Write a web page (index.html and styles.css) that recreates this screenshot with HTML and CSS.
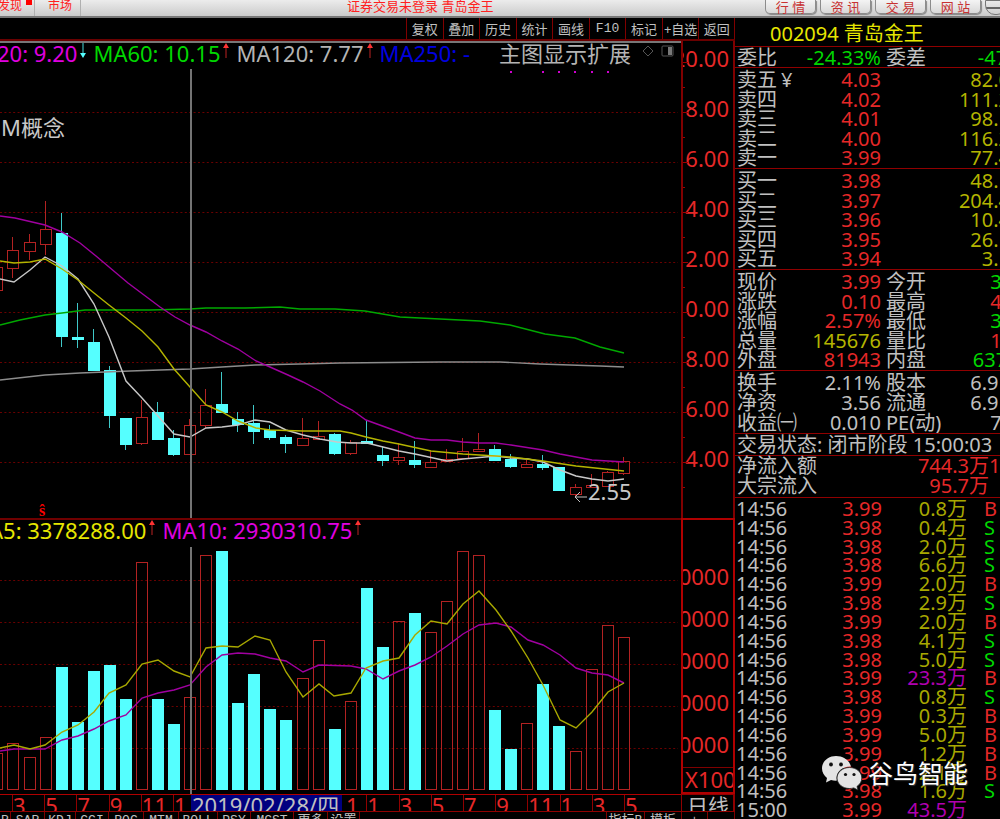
FILE: index.html
```html
<!DOCTYPE html>
<html lang="zh-CN">
<head>
<meta charset="utf-8">
<title>青岛金王 002094</title>
<link rel="stylesheet" href="styles.css">
</head>
<body>
<header class="topbar">
  <nav class="topnav">
    <a class="topnav-item first" href="#">发现<span class="dot"></span></a>
    <a class="topnav-item" href="#">市场</a>
  </nav>
  <p class="caption">证券交易未登录 青岛金王</p>
  <div class="top-buttons">
    <button class="pill">行 情</button>
    <button class="pill">资 讯</button>
    <button class="pill">交 易</button>
    <button class="pill">网 站</button>
    <button class="round" aria-label="最小化"></button>
  </div>
</header>
<main class="terminal">
  <section class="charts">
    <div class="toolbar">
      <div class="tools">
        <button>复权</button><button>叠加</button><button>历史</button><button>统计</button><button>画线</button><button class="mono">F10</button><button>标记</button><button>+自选</button><button>返回</button>
      </div>
    </div>
    <div class="panes">
      <div class="pane price-pane">
        <div class="legend">
          <span class="magenta lead-ma20">20: 9.20</span><svg class="arrow" viewBox="0 0 8 16"><path d="M4 0V11" stroke="#4dd" /><path d="M1 10h6L4 15z" fill="#5ff"/></svg>
          <span class="green">MA60: 10.15</span><svg class="arrow" viewBox="0 0 8 16"><path d="M4 4V15" stroke="#b22"/><path d="M1 5h6L4 0z" fill="#f33"/></svg>
          <span class="silver">MA120: 7.77</span><svg class="arrow" viewBox="0 0 8 16"><path d="M4 4V15" stroke="#b22"/><path d="M1 5h6L4 0z" fill="#f33"/></svg>
          <span class="blue">MA250: -</span>
          <span class="silver overlay-title">主图显示扩展</span>
          <svg class="pane-icons" viewBox="0 0 36 16"><path d="M7 3l5 5-5 5-5-5z" fill="none" stroke="#555"/><rect x="21" y="3" width="11" height="10" rx="1" fill="none" stroke="#555"/><path d="M27 4h4v8h-4z" fill="#777"/></svg>
        </div>
        <div class="plot">
          <svg id="price" viewBox="0 69 681 449" preserveAspectRatio="none"></svg>
          <span class="note concept">M概念</span>
          <span class="note mark">ŝ</span>
          <span class="note low"><svg viewBox="0 0 14 12"><path d="M13 6H1M6 1L1 6l5 5" fill="none" stroke="#c0c0c0"/></svg>2.55</span>
        </div>
      </div>
      <div class="axis price-axis">
        <svg class="ticks-svg" id="priceTicks" viewBox="0 41 8 477" preserveAspectRatio="none"></svg>
        <div class="axis-labels"><span>20.00</span><span>8.00</span><span>6.00</span><span>4.00</span><span>2.00</span><span>0.00</span><span>8.00</span><span>6.00</span><span>4.00</span></div>
      </div>
      <div class="pane volume-pane">
        <div class="legend">
          <span class="yellow lead-ma5">A5: 3378288.00</span><svg class="arrow" viewBox="0 0 8 16"><path d="M4 4V15" stroke="#b22"/><path d="M1 5h6L4 0z" fill="#f33"/></svg>
          <span class="magenta">MA10: 2930310.75</span><svg class="arrow" viewBox="0 0 8 16"><path d="M4 4V15" stroke="#b22"/><path d="M1 5h6L4 0z" fill="#f33"/></svg>
        </div>
        <div class="plot">
          <svg id="volume" viewBox="0 547 681 247" preserveAspectRatio="none"></svg>
        </div>
      </div>
      <div class="axis volume-axis">
        <div class="axis-labels"><span>0000</span><span>0000</span><span>0000</span><span>0000</span><span>0000</span></div>
        <div class="unit">X100</div>
      </div>
      <div class="timeline">
        <span>3</span><span>5</span><span>7</span><span>9</span><span>11</span><span>1</span><span></span><span></span><span></span><span></span><span class="tail">1</span><span>1</span><span>3</span><span>5</span><span>7</span><span>9</span><span>11</span><span>1</span><span>3</span><span>5</span>
        <time class="cursor-date">2019/02/28/四</time>
      </div>
      <div class="period">日线</div>
      <div class="indicators">
        <button class="cut">R</button><button>SAR</button><button>KDJ</button><button>CCI</button><button>ROC</button><button>MTM</button><button>BOLL</button><button>PSY</button><button>MCST</button><button>更多</button><button>设置</button><span></span><button>指标B</button><button>模板</button><button>+</button><button>-</button>
      </div>
    </div>
  </section>
  <aside class="quote">
    <h1 class="stock">002094 青岛金王</h1>
    <dl class="block ratio">
      <div class="row"><dt>委比</dt><dd class="green">-24.33%</dd><dt>委差</dt><dd class="green">-4787</dd></div>
    </dl>
    <dl class="block five">
      <div class="row"><dt>卖五<span class="yen">¥</span></dt><dd>4.03</dd><dd class="vol">82.0万</dd></div>
      <div class="row"><dt>卖四</dt><dd>4.02</dd><dd class="vol">111.2万</dd></div>
      <div class="row"><dt>卖三</dt><dd>4.01</dd><dd class="vol">98.1万</dd></div>
      <div class="row"><dt>卖二</dt><dd>4.00</dd><dd class="vol">116.2万</dd></div>
      <div class="row"><dt>卖一</dt><dd>3.99</dd><dd class="vol">77.4万</dd></div>
    </dl>
    <dl class="block five">
      <div class="row"><dt>买一</dt><dd>3.98</dd><dd class="vol">48.1万</dd></div>
      <div class="row"><dt>买二</dt><dd>3.97</dd><dd class="vol">204.4万</dd></div>
      <div class="row"><dt>买三</dt><dd>3.96</dd><dd class="vol">10.4万</dd></div>
      <div class="row"><dt>买四</dt><dd>3.95</dd><dd class="vol">26.1万</dd></div>
      <div class="row"><dt>买五</dt><dd>3.94</dd><dd class="vol">3.1万</dd></div>
    </dl>
    <dl class="block five">
      <div class="row"><dt>现价</dt><dd>3.99</dd><dt>今开</dt><dd class="green">3.88</dd></div>
      <div class="row"><dt>涨跌</dt><dd>0.10</dd><dt>最高</dt><dd>4.05</dd></div>
      <div class="row"><dt>涨幅</dt><dd>2.57%</dd><dt>最低</dt><dd class="green">3.85</dd></div>
      <div class="row"><dt>总量</dt><dd class="olive">145676</dd><dt>量比</dt><dd>1.05</dd></div>
      <div class="row"><dt>外盘</dt><dd>81943</dd><dt>内盘</dt><dd class="green">63733</dd></div>
    </dl>
    <dl class="block padded">
      <div class="row"><dt>换手</dt><dd class="silver">2.11%</dd><dt>股本</dt><dd class="silver">6.91亿</dd></div>
      <div class="row"><dt>净资</dt><dd class="silver">3.56</dd><dt>流通</dt><dd class="silver">6.91亿</dd></div>
      <div class="row"><dt>收益㈠</dt><dd class="silver">0.010</dd><dt>PE(动)</dt><dd class="silver">73.5</dd></div>
    </dl>
    <p class="block status">交易状态: 闭市阶段 15:00:03</p>
    <dl class="block flow">
      <div class="row"><dt>净流入额</dt><dd>744.3万</dd><dd class="share">17%</dd></div>
      <div class="row"><dt>大宗流入</dt><dd>95.7万</dd></div>
    </dl>
    <table class="trades">
      <tbody>
        <tr><td>14:56</td><td>3.99</td><td>0.8万</td><td>B</td></tr>
        <tr class="sell"><td>14:56</td><td>3.98</td><td>0.4万</td><td>S</td></tr>
        <tr class="sell"><td>14:56</td><td>3.98</td><td>2.0万</td><td>S</td></tr>
        <tr class="sell"><td>14:56</td><td>3.98</td><td>6.6万</td><td>S</td></tr>
        <tr><td>14:56</td><td>3.99</td><td>2.0万</td><td>B</td></tr>
        <tr class="sell"><td>14:56</td><td>3.98</td><td>2.9万</td><td>S</td></tr>
        <tr><td>14:56</td><td>3.99</td><td>2.0万</td><td>B</td></tr>
        <tr class="sell"><td>14:56</td><td>3.98</td><td>4.1万</td><td>S</td></tr>
        <tr class="sell"><td>14:56</td><td>3.98</td><td>5.0万</td><td>S</td></tr>
        <tr class="big"><td>14:56</td><td>3.99</td><td>23.3万</td><td>B</td></tr>
        <tr class="sell"><td>14:56</td><td>3.98</td><td>0.8万</td><td>S</td></tr>
        <tr><td>14:56</td><td>3.99</td><td>0.3万</td><td>B</td></tr>
        <tr><td>14:56</td><td>3.99</td><td>5.0万</td><td>B</td></tr>
        <tr><td>14:56</td><td>3.99</td><td>1.2万</td><td>B</td></tr>
        <tr><td>14:56</td><td>3.99</td><td>2.1万</td><td>B</td></tr>
        <tr class="sell"><td>14:56</td><td>3.98</td><td>1.6万</td><td>S</td></tr>
        <tr class="big"><td>15:00</td><td>3.99</td><td>43.5万</td><td></td></tr>
      </tbody>
    </table>
    <div class="watermark">
      <svg viewBox="0 0 42 36"><path d="M15 1C7 1 1 6.500 1 13.500c0 4 2 7 5 9.500l-1 4.500 5-2.500c2 .5 4 .8 6 .6-2-8 5-14.600 14-14.100C28.500 5.500 22.500 1 15 1z" fill="#e4e4e4"/><path d="M28.500 12.500c-7 0-12.500 4.700-12.500 10.500s5.500 10.500 12.500 10.500c1.500 0 3-.2 4.300-.6l4.200 2.200-1-3.700c3-2 4.800-5 4.800-8.400 0-5.800-5.300-10.500-12.300-10.500z" fill="#e4e4e4" stroke="#222" stroke-width=".8"/><g fill="#111"><circle cx="10" cy="9.500" r="1.900"/><circle cx="20" cy="9.500" r="1.900"/><circle cx="24.500" cy="19.500" r="1.600"/><circle cx="33" cy="19.500" r="1.600"/></g></svg>
      <span>谷鸟智能</span>
    </div>
  </aside>
</main>
<script src="chart.js"></script>
</body>
</html>
```
FILE: styles.css
```css
* { box-sizing: border-box; margin: 0; padding: 0; }
html, body { height: 100%; }
body {
  display: flex;
  flex-direction: column;
  overflow: hidden;
  background: #000;
  color: #c0c0c0;
  font-family: "Noto Sans", "Noto Sans CJK SC", sans-serif;
}
button { border: 0; background: none; color: inherit; font: inherit; white-space: nowrap; }
a { color: inherit; text-decoration: none; }

.magenta { color: #e000e0; }
.green { color: #00d800; }
.silver { color: #b4b4b4; }
.blue { color: #0000e0; }
.yellow { color: #e6e600; }

/* top bar */
.topbar {
  flex: none;
  display: grid;
  grid-template-columns: 347px 1fr 235px;
  height: 18px;
  border-bottom: 2px solid #777;
  background: linear-gradient(#ececec, #cbcbcb);
  color: #ff2020;
  font-size: 12px;
  line-height: 12px;
  overflow: hidden;
}
.topnav { display: flex; }
.topnav-item { position: relative; padding: 0 8px; border-right: 1px solid #b0b0b0; }
.topnav-item.first { width: 35px; margin-right: 5px; padding: 0; text-indent: -2px; }
.dot { position: absolute; right: 2px; top: 0; width: 6px; height: 5px; background: #f00; }
.caption { font-size: 13px; }
.top-buttons { display: flex; gap: 4px; }
.pill {
  flex: none;
  width: 51px;
  height: 14px;
  border: 1px solid #8c8c8c;
  border-top: 0;
  border-radius: 0 0 5px 5px;
  background: linear-gradient(#f4f4f4, #d8d8d8);
  box-shadow: 1px 1px 1px #888;
  color: #c83232;
  font-size: 13px;
  line-height: 8px;
}
.round { flex: none; width: 22px; height: 15px; border: 1px solid #777; border-radius: 0 0 10px 10px; background: linear-gradient(transparent 45%, #666 45% 60%, transparent 60%); }

/* layout */
.terminal { flex: 1; min-height: 0; display: grid; grid-template-columns: minmax(0, 1fr) 265px; }
.charts { display: flex; flex-direction: column; min-width: 0; min-height: 0; }
.toolbar { flex: none; display: flex; justify-content: flex-end; height: 23px; border-bottom: 2px solid #6a0000; }
.tools { display: grid; grid-template-columns: repeat(9, 1fr); width: 329px; font-size: 13px; }
.tools button { border-left: 1px solid #800000; line-height: 20px; overflow: hidden; }
.tools button:last-child { border-right: 1px solid #800000; }
.tools .mono { font-family: "Liberation Mono", monospace; }

.panes {
  flex: 1;
  min-height: 0;
  display: grid;
  grid-template-columns: minmax(0, 1fr) 54px;
  grid-template-rows: minmax(0, 477fr) minmax(0, 276fr) 18px 7px;
}
.pane { display: flex; flex-direction: column; min-width: 0; }
.price-pane { border-top: 2px solid #777; }
.volume-pane { border-top: 2px solid #700000; }
.legend { display: flex; flex: none; height: 26px; font-size: 22px; line-height: 20px; white-space: nowrap; overflow: hidden; }
.volume-pane .legend { height: 27px; }
.arrow { flex: none; width: 8px; height: 16px; margin: 0 6px 0 2px; }
.lead-ma20 { margin-left: -3px; }
.lead-ma5 { margin-left: -11px; }
.overlay-title { margin-left: 29px; }
.pane-icons { flex: none; width: 36px; height: 16px; margin-left: 10px; }
.plot { position: relative; flex: 1; min-height: 0; }
.plot > svg { display: block; width: 100%; height: 100%; }
.note { position: absolute; color: #c8c8c8; font-size: 22px; line-height: 24px; white-space: nowrap; }
.concept { left: 1px; top: 46px; }
.mark { left: 39px; bottom: -2px; color: #f00; font: bold 16px/18px "Liberation Serif", serif; }
.low { left: 574px; bottom: 15px; display: flex; align-items: center; }
.low svg { width: 14px; height: 12px; margin-top: 11px; }

.axis { position: relative; border-left: 2px solid #800000; border-right: 2px solid #800000; color: #e62828; font-size: 22px; overflow: hidden; }
.axis-labels { display: flex; flex-direction: column; align-items: flex-end; padding-right: 4px; }
.price-axis .axis-labels { margin-top: -8px; line-height: 50px; }
.ticks-svg { position: absolute; left: 0; top: 0; width: 8px; height: 100%; }
.volume-axis { display: flex; flex-direction: column; border: 2px solid #b00000; }
.volume-axis .axis-labels { flex: 1; padding-top: 35px; line-height: 42px; }
.unit { border-top: 1px solid #800000; padding-left: 2px; line-height: 22px; height: 25px; }

.timeline {
  position: relative;
  display: grid;
  grid-template-columns: repeat(19, 1fr) 57px;
  padding-left: 12px;
  border-top: 1px solid #b00000;
  border-bottom: 1px solid #900000;
  color: #e62828;
  font-size: 22px;
  line-height: 21px;
  overflow: hidden;
}
.timeline span { border-left: 1px solid #900000; padding-left: 0; min-width: 0; }
.timeline .tail { padding-left: 11px; }
.cursor-date { position: absolute; left: 191px; top: 0; width: 151px; height: 17px; padding-left: 1px; background: #000080; color: #c0c0c0; white-space: nowrap; overflow: hidden; }
.period { border: 1px solid #900000; border-width: 1px 2px 1px 1px; padding-left: 5px; font-size: 21px; line-height: 22px; overflow: hidden; }
.indicators {
  grid-column: 1 / 3;
  display: grid;
  grid-template-columns: 11px 34px 31px 33px 35px 35px 39px 33px 43px 34px 32px 1fr 38px 37px 26px 27px;
  font-family: "Liberation Mono", "Noto Sans CJK SC", monospace;
  font-size: 13px;
  line-height: 14px;
  overflow: hidden;
}
.indicators button { border-right: 1px solid #800000; height: 18px; overflow: hidden; }
.indicators span { border-right: 1px solid #800000; }

/* quote panel: its rows are wider than the visible strip */
.quote {
  position: relative;
  display: flex;
  flex-direction: column;
  min-width: 0;
  min-height: 0;
  font-size: 20px;
  line-height: 20px;
  white-space: nowrap;
  overflow: hidden;
}
.stock { flex: none; height: 28px; padding-left: 35px; color: #e6e600; font-size: 20px; font-weight: 400; line-height: 32px; }
.block { flex: none; border-top: 1px solid #900000; margin-right: -30px; padding-left: 2px; }
.ratio { height: 21px; line-height: 22px; }
.five { display: grid; grid-auto-rows: 1fr; height: 101px; padding-top: 2px; }
.padded { padding-top: 2px; }
.row { display: grid; grid-template-columns: 60px 84px 5px 60px 84px; min-height: 0; }
.row dt { grid-column: 1; }
.row dd { grid-column: 2; text-align: right; color: #e62828; }
.row dt, .row dd { min-height: 0; height: 0; min-width: 0; }
.padded .row, .flow .row { height: 20px; }
.row dd + dt { grid-column: 4; }
.row dt + dd:last-child:nth-child(4), .row .vol { grid-column: 5; }
.row .green { color: #00d800; }
.row .silver { color: #c0c0c0; }
.row .olive, .row .vol { color: #b4b400; }
.yen { padding-left: 4px; }
.status { height: 22px; line-height: 22px; }
.flow { padding-bottom: 1px; }
.flow .row { grid-template-columns: 100px 152px 40px; }
.flow .row .share { grid-column: 3; text-align: left; }
.trades { flex: 1; min-height: 0; display: flex; flex-direction: column; border-top: 1px solid #900000; padding-top: 1px; }
.trades tbody { flex: 1; display: flex; flex-direction: column; min-height: 0; }
.trades tr { flex: 1 1 0; min-height: 0; display: grid; grid-template-columns: 60px 86px 85px 1fr; padding-left: 1px; line-height: 20px; }
.trades td { min-height: 0; text-align: right; color: #e62828; }
.trades td:first-child { text-align: left; color: #c0c0c0; }
.trades td:nth-child(3) { color: #a8a800; }
.trades td:last-child { padding-left: 17px; text-align: left; }
.trades .sell td:last-child { color: #00d800; }
.trades .big td:nth-child(3) { color: #b000b0; }
.watermark { position: absolute; left: 86px; bottom: 28px; display: flex; align-items: center; gap: 5px; color: #fff; font-size: 25px; line-height: 36px; text-shadow: 1px 1px 1px #333; }
.watermark svg { width: 42px; height: 36px; }
```
FILE: chart.js
```js
const UP = "#b22222", DOWN = "#55ffff", GRID = "#6a0000";
const FIRST_X = -2.6, STEP = 16.06, HALF = 5.5;

// [rising, body top, body bottom, high, low, volume bar top]
const bars = [
  [1,267,290,267,290,753],[1,250,268,237,278,743],[1,242,251,234,260,757],[1,229,244,201,255,737],
  [0,233,336,213,347,667],[0,337,339,303,348,722],[0,342,370,329,371,671],[0,370,415,366,428,665],
  [0,418,444,418,450,699],[1,417,443,400,445,562],[0,412,439,402,439,699],[0,438,454,430,456,724],
  [1,425,454,419,454,697],[1,405,425,389,428,555],[0,404,412,372,413,551],[0,419,424,412,432,703],
  [0,423,431,405,444,674],[0,430,437,425,440,709],[0,437,443,435,453,720],[1,438,445,418,445,678],
  [1,436,439,421,439,640],[0,434,453,433,455,729],[1,442,453,440,455,701],[0,441,443,420,444,588],
  [0,455,460,447,466,647],[1,457,460,443,465,621],[0,460,464,441,468,613],[1,462,467,451,467,632],
  [1,459,461,449,461,601],[1,451,458,438,459,551],[1,449,451,433,451,555],[0,449,460,445,461,710],
  [0,459,466,454,468,749],[1,464,467,460,467,723],[0,464,467,455,470,684],[0,467,490,467,491,726],
  [1,487,494,484,497,751],[1,485,487,474,487,669],[1,472,486,471,486,625],[1,461,473,457,475,637]
];

const priceLines = {
  "#00a800": "0,325 20,320 45,315 62,313 85,310 150,310 190,309 206,308 245,308 280,307 300,309 335,309 365,311 400,317 480,321 510,325 545,334 575,338 600,347 624,353",
  "#8c8c8c": "0,380 45,375 80,373 130,371 160,370 190,369 222,367 255,365 300,364 340,363 440,362 500,362 540,364 600,366 624,367",
  "#a000a0": "0,216 15,218 45,225 62,232 80,243 96,256 128,283 160,307 175,317 190,325 206,332 222,341 238,349 256,361 270,367 288,375 303,382 320,391 340,404 352,410 366,420 399,432 415,438 431,440 447,440 463,442 479,443 496,443 511,445 543,450 560,454 592,460 624,462",
  "#c8c8c8": "0,279 14,282 30,270 45,257 62,266 78,279 94,304 109,337 126,381 142,398 158,416 174,434 190,437 206,428 222,427 238,425 255,420 270,422 286,430 303,435 320,439 337,442 351,443 367,443 383,447 399,451 415,454 447,461 463,459 496,456 511,458 528,459 543,462 560,470 576,476 592,479 608,481 624,479",
  "#b4b400": "0,261 14,263 30,262 45,259 62,269 78,280 94,293 109,305 126,318 142,331 158,347 174,369 190,387 206,405 222,412 238,421 256,428 270,430 303,431 340,431 351,433 366,437 383,441 399,444 431,451 463,454 496,456 511,457 543,461 576,466 624,471"
};
const volumeLines = {
  "#a000a0": "0,751 14,749 45,749 62,740 78,736 94,729 109,721 126,715 142,698 158,693 174,690 190,685 206,667 222,655 238,653 255,654 270,658 286,661 303,672 319,665 351,666 366,669 383,679 399,671 415,665 431,657 447,646 463,634 479,625 496,623 511,627 528,640 543,645 560,655 576,668 592,673 608,675 624,683",
  "#a8a800": "0,748 14,745 30,749 45,745 62,732 78,725 94,712 109,693 126,685 142,664 158,660 174,671 190,677 206,648 222,646 238,647 255,636 270,640 286,672 303,697 319,684 334,696 351,693 366,668 383,661 399,658 415,635 431,621 447,624 463,604 479,591 496,610 511,631 528,658 543,685 560,720 576,728 592,712 608,692 624,683"
};

const line = (x1, y1, x2, y2, color, extra = "") =>
  `<line x1="${x1}" y1="${y1}" x2="${x2}" y2="${y2}" stroke="${color}" ${extra}/>`;
const grid = ys => ys.map(y => line(0, y + 0.5, 678, y + 0.5, GRID, 'stroke-dasharray="2 2.400"')).join("");
const curves = set => Object.entries(set)
  .map(([color, points]) => `<polyline points="${points}" fill="none" stroke="${color}" stroke-width="1.400"/>`).join("");
const box = (x, top, bottom, rising) => rising
  ? `<rect x="${x - HALF}" y="${top + 0.5}" width="${2 * HALF}" height="${bottom - top}" fill="none" stroke="${UP}"/>`
  : `<rect x="${x - HALF - 0.5}" y="${top}" width="${2 * HALF + 1}" height="${bottom - top + 1}" fill="${DOWN}"/>`;

let price = grid([112, 162, 212, 262, 312, 362, 412, 462]);
let volume = grid([580, 622, 664, 706, 748]);
bars.forEach(([rising, top, bottom, high, low, vol], i) => {
  const x = Math.round(FIRST_X + i * STEP);
  const color = rising ? UP : "#3fc8c8";
  price += line(x - 0.5, high, x - 0.5, top, color) + line(x - 0.5, bottom, x - 0.5, low, color);
  price += box(x, top, bottom, rising);
  volume += box(x, vol, 789, rising);
});
price += curves(priceLines) + line(191, 69, 191, 518, "#747474", 'stroke-width="2"');
price += [511, 543, 559, 575, 592, 608].map(x => `<rect x="${x - 1}" y="71" width="2" height="2" fill="#d000d0"/>`).join("");
volume += curves(volumeLines) + line(191, 547, 191, 794, "#747474", 'stroke-width="2"');
document.getElementById("price").innerHTML = price;
document.getElementById("volume").innerHTML = volume;

let ticks = "";
for (let i = 0; i < 9; i++) {
  ticks += line(0, 62.5 + 50 * i, 5, 62.5 + 50 * i, "#a00000") + line(0, 87.5 + 50 * i, 2, 87.5 + 50 * i, "#a00000");
}
document.getElementById("priceTicks").innerHTML = ticks;
```
